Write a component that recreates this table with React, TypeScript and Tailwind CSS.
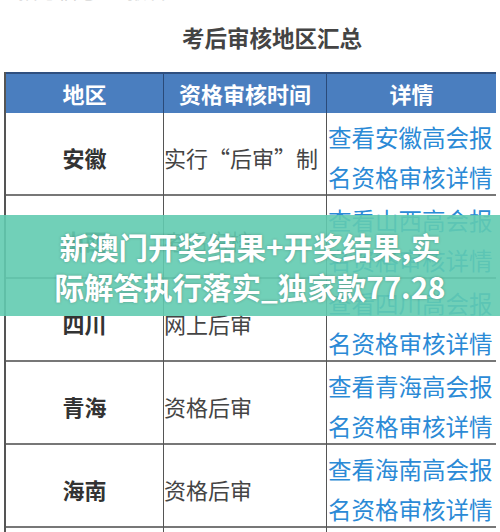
const rows = [
  { region: "安徽", time: "实行“后审”制", link: ["查看安徽高会报", "名资格审核详情"] },
  { region: "山西", time: "考后审核", link: ["查看山西高会报", "名资格审核详情"] },
  { region: "四川", time: "网上后审", link: ["查看四川高会报", "名资格审核详情"] },
  { region: "青海", time: "资格后审", link: ["查看青海高会报", "名资格审核详情"] },
  { region: "海南", time: "资格后审", link: ["查看海南高会报", "名资格审核详情"] },
];

const font = { fontFamily: '"Noto Sans CJK SC", "Noto Sans", sans-serif' };

export default function App() {
  return (
    <div className="relative h-[532px] w-[500px] overflow-hidden bg-white" style={font}>
      {/* cut-off line from above */}
      <div className="h-[6px] overflow-hidden pl-[18px]">
        <div className="-mt-[21px] text-[20px] leading-[24px] text-[#c8c8c8]">招考信息 · 报名</div>
      </div>

      {/* Title */}
      <div className="flex h-[66px] items-center justify-center pl-[44px] pb-[2px] text-[22.5px] font-semibold text-[#444]">
        考后审核地区汇总
      </div>

      {/* Table */}
      <div className="ml-[4px] w-[492px] border-l-2 border-[#555]">
        <div className="grid h-[41px] grid-cols-[158px_163px_169px] border-t-2 border-[#2f4f7f] bg-[#4a7ebf] text-[22px] font-bold text-white">
          <div className="flex items-center justify-center border-r border-[#2a4a78]">地区</div>
          <div className="flex items-center justify-center border-r border-[#2a4a78]">资格审核时间</div>
          <div className="flex items-center justify-center">详情</div>
        </div>
        {rows.map((r) => (
          <div
            key={r.region}
            className="grid h-[83px] grid-cols-[158px_163px_169px] border-b-2 border-[#777]"
          >
            <div className="flex items-center justify-center border-r border-[#555] pt-[4px] text-[22px] font-bold text-[#333]">
              {r.region}
            </div>
            <div className="flex items-center border-r border-[#555] pt-[4px] text-[22px] text-[#444]">
              {r.time}
            </div>
            <div className="flex flex-col justify-center pl-[1px] pt-[4px] text-[23.5px] leading-[40px] text-[#2b8ad6]">
              <span>{r.link[0]}</span>
              <span>{r.link[1]}</span>
            </div>
          </div>
        ))}
        <div className="grid h-[20px] grid-cols-[158px_163px_169px]">
          <div className="border-r border-[#555]" />
          <div className="border-r border-[#555]" />
          <div />
        </div>
      </div>

      {/* Overlay banner */}
      <div className="absolute inset-x-0 top-[215px] flex h-[101px] flex-col items-center justify-center bg-[#62cbb0]/90 text-[29.5px] font-bold leading-[40px] text-white [text-shadow:0_0_3px_rgba(0,0,0,0.25)]">
        <span>新澳门开奖结果+开奖结果,实</span>
        <span>际解答执行落实_独家款77.28</span>
      </div>
    </div>
  );
}
